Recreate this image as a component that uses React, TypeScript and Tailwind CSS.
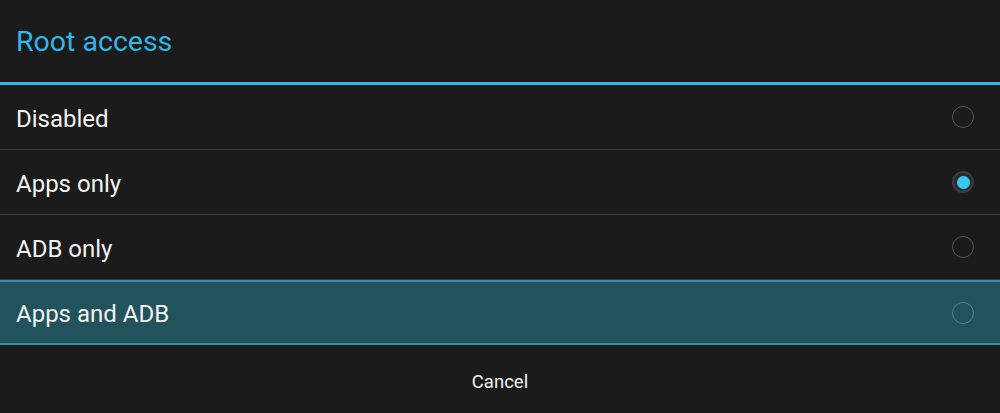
import React, { useState } from 'react';

const OPTIONS = ['Disabled', 'Apps only', 'ADB only', 'Apps and ADB'];

const Radio = ({ checked }: { checked: boolean }) => (
  <div
    className={
      checked
        ? 'w-[22px] h-[22px] rounded-full border-2 border-[#3d3d3d] bg-[#262626] flex items-center justify-center'
        : 'w-[22px] h-[22px] rounded-full border-[1.5px] border-[rgba(255,255,255,0.24)] flex items-center justify-center'
    }
  >
    {checked && <div className="w-[13px] h-[13px] rounded-full bg-[#3cc4ef] shadow-[0_0_2px_#1a6f8c]"></div>}
  </div>
);

export default function App() {
  const [selected] = useState(1);
  const pressed = 3;

  return (
    <div className="w-[1000px] h-[413px] bg-[#1b1b1b] flex flex-col" style={{ fontFamily: 'Roboto, sans-serif' }}>
      {/* Title */}
      <div className="h-[82px] flex items-center px-4 pt-[2px] text-[28.5px] text-[#33b5e5]">Root access</div>
      <div className="h-[3px] bg-[#33b5e5]"></div>

      {/* Options */}
      <div className="flex flex-col">
        {OPTIONS.map((label, i) => (
          <div
            key={label}
            className={
              i === pressed
                ? 'h-[65px] flex items-center justify-between pl-4 pr-[26px] bg-[#22525c] border-t-2 border-b-2 border-[#3a8ca3] mb-[1px]'
                : 'h-[65px] flex items-center justify-between pl-4 pr-[26px] border-b border-[#3a3a3a]'
            }
          >
            <span className="text-[24px] text-[#f2f2f2] pt-[3px]">{label}</span>
            <Radio checked={i === selected} />
          </div>
        ))}
      </div>

      {/* Buttons */}
      <div className="flex-1 flex items-center justify-center pt-[7px] text-[18.5px] text-[#f2f2f2]">Cancel</div>
    </div>
  );
}
